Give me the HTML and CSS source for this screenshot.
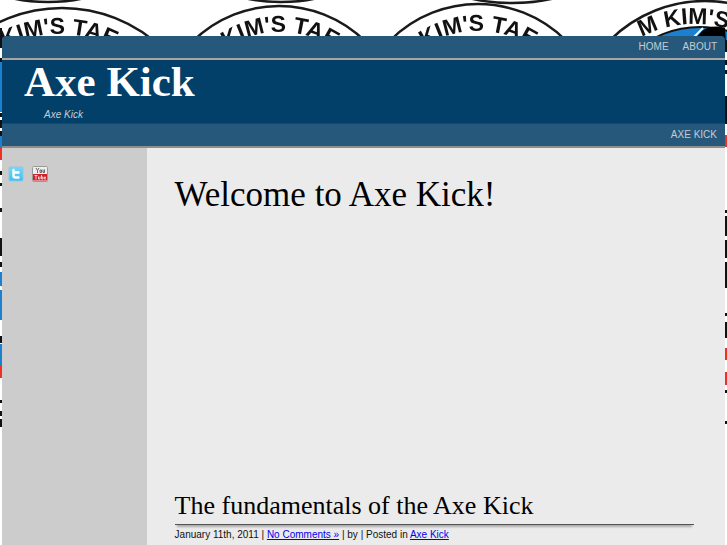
FILE: index.html
```
<!DOCTYPE html>
<html lang="en">
<head>
    <meta charset="UTF-8">
    <meta name="viewport" content="width=device-width, initial-scale=1.0">
    <title>Axe Kick</title>
    <link rel="stylesheet" href="styles.css">
</head>
<body>
    <!-- Tiled club badge behind the page -->
    <svg class="backdrop" viewBox="0 0 727 545" preserveAspectRatio="xMidYMin slice" aria-hidden="true">
        <defs>
            <path id="arc1" d="M-60 153 A119 119 0 0 1 178 153"/>
            <path id="arc2" d="M183 129 A97 97 0 0 1 377 129"/>
            <path id="arc3" d="M381 128 A97 97 0 0 1 575 128"/>
            <path id="arc4" d="M582 136 A112 112 0 0 1 806 136"/>
        </defs>
        <g class="ring">
            <ellipse cx="48" cy="-30" rx="75" ry="32"/>
            <ellipse cx="281" cy="-30" rx="75" ry="32"/>
            <ellipse cx="512" cy="-29" rx="80" ry="32"/>
            <circle cx="62" cy="153" r="145"/>
            <circle cx="279" cy="129" r="123"/>
            <circle cx="478" cy="128" r="124"/>
            <circle cx="705" cy="136" r="135"/>
        </g>
        <circle cx="700" cy="128" r="101" fill="#1c7fd0" stroke="#111" stroke-width="2"/>
        <path d="M696 38 L702 31 Q712 24 725 28 L727 60 H696 Z" fill="#000"/>
        <path d="M693 38 L703 28" stroke="#fff" stroke-width="2"/>
        <path d="M724 40h3v505h-3z" fill="#fff"/>
        <g class="badge-text">
            <text><textPath href="#arc1" startOffset="50%">KIM'S TAE</textPath></text>
            <text><textPath href="#arc2" startOffset="50%">KIM'S TAE</textPath></text>
            <text><textPath href="#arc3" startOffset="50%">KIM'S TAE</textPath></text>
            <text><textPath href="#arc4" startOffset="50%">M KIM'S T</textPath></text>
        </g>
        <g fill="#111">
            <path d="M0 28h2v20h-2z M0 58h2v4h-2z M0 113h2v4h-2z M0 120h2v8h-2z M0 131h2v5h-2z M0 171h2v4h-2z M0 183h2v3h-2z"/>
            <path d="M0 208h2v4h-2z M0 238h2v18h-2z M0 262h2v5h-2z M0 336h2v7h-2z M0 400h2v3h-2z M0 411h2v5h-2z M0 419h2v8h-2z"/>
            <path d="M724 40h3v12h-3z M724 60h3v5h-3z M724 70h3v4h-3z M724 96h3v28h-3z M724 210h3v3h-3z M724 216h3v20h-3z M724 240h3v18h-3z M724 262h3v26h-3z M724 313h3v3h-3z M724 322h3v16h-3z M724 390h3v3h-3z M724 421h3v3h-3z"/>
        </g>
        <path d="M0 62h2v50h-2z M0 136h2v11h-2z M0 272h2v14h-2z M0 290h2v30h-2z M0 344h2v21h-2z" fill="#1c7fd0"/>
        <path d="M0 147h2v13h-2z M0 365h2v13h-2z M724 135h3v12h-3z M724 348h3v12h-3z M724 372h3v13h-3z" fill="#ee3124"/>
    </svg>

    <div class="page">
        <nav class="bar bar-top">
            <a href="#">HOME</a>
            <a href="#">ABOUT</a>
        </nav>
        <header class="masthead">
            <h1><a href="#">Axe Kick</a></h1>
            <p>Axe Kick</p>
        </header>
        <nav class="bar bar-categories">
            <a href="#">AXE KICK</a>
        </nav>

        <div class="columns">
            <aside class="sidebar">
                <a href="#" aria-label="Twitter">
                    <svg width="16" height="16" viewBox="0 0 16 16">
                        <defs>
                            <linearGradient id="sky" x1="0" y1="0" x2="0" y2="1">
                                <stop offset="0" stop-color="#7fd4f5"/>
                                <stop offset="1" stop-color="#35c0f3"/>
                            </linearGradient>
                        </defs>
                        <rect x="1" y="1" width="14" height="14" rx="1" fill="url(#sky)" stroke="#8fcbe2"/>
                        <path d="M5.5 4 V9.5 Q5.5 11.5 7.5 11.5 H10.5 M5.5 6.5 H10.5" fill="none" stroke="#fff" stroke-width="2.4" stroke-linecap="round"/>
                    </svg>
                </a>
                <a href="#" aria-label="YouTube">
                    <svg width="16" height="16" viewBox="0 0 16 16">
                        <rect x=".5" y=".5" width="15" height="15" rx="1" fill="#eee" stroke="#999"/>
                        <path d="M1 8h14v6.5h-14z" fill="#d2202c"/>
                        <path d="M4 2l1.5 2.5L7 2M5.5 4.5V7M8 4v2.5h1.5V4zM11 3.5v3h1.5v-3" fill="none" stroke="#666"/>
                        <path d="M2.5 9.5h3M4 9.5v4M6.5 10.5v2.5h1.5v-2.5M9.5 9v4h1.5v-2h-1.5M14 13h-1.5v-2h1v1" fill="none" stroke="#f7c9cb"/>
                    </svg>
                </a>
            </aside>

            <main class="content">
                <h2 class="welcome">Welcome to Axe Kick!</h2>
                <article class="post">
                    <h2><a href="#">The fundamentals of the Axe Kick</a></h2>
                    <p class="meta">January 11th, 2011 | <a href="#">No Comments »</a> | by | Posted in <a href="#">Axe Kick</a></p>
                </article>
            </main>
        </div>
    </div>
</body>
</html>
```
FILE: styles.css
```
* {
    box-sizing: border-box;
}
html {
    overflow: hidden;
    background: #fff;
}
body {
    margin: 0;
    padding: 36px 2px 0;
    font-family: "Liberation Sans", Arial, sans-serif;
    font-size: 10px;
    color: #111;
}
h1, h2, p {
    margin: 0;
}

/* Background badges */
.backdrop {
    position: fixed;
    top: 0;
    left: 0;
    width: 100%;
    height: 100%;
    z-index: -1;
}
.ring {
    fill: none;
    stroke: #1a1a1a;
    stroke-width: 2.5;
}
.badge-text {
    font-size: 23px;
    font-weight: bold;
    fill: #111;
    text-anchor: middle;
}

.page {
    display: flex;
    flex-direction: column;
    min-height: calc(100vh - 36px);
    border-radius: 4px 4px 0 0;
    overflow: hidden;
}

/* Navigation bars */
.bar {
    display: flex;
    justify-content: flex-end;
    align-items: center;
    gap: 14px;
    padding: 0 8px;
    background: #26587c;
}
.bar a {
    color: #c4cdd3;
    text-decoration: none;
    line-height: 22px;
}
.bar-top {
    border-bottom: 2px solid #aba5a3;
}
.bar-categories {
    border-top: 1px solid #1c4765;
    border-bottom: 2px solid #918f8e;
}

.masthead {
    padding: 0 22px;
    background: #034069;
    color: #c4cdd3;
}
.masthead h1 {
    font-family: "Liberation Serif", "Times New Roman", serif;
    font-size: 43px;
    line-height: 44px;
}
.masthead h1 a {
    color: #fff;
    text-decoration: none;
}
.masthead p {
    padding: 5px 20px 2px;
    font-style: italic;
    line-height: 12px;
}

.columns {
    display: flex;
    flex: 1;
}
.sidebar {
    display: flex;
    align-items: flex-start;
    gap: 8px;
    width: 20%;
    padding: 18px 6px;
    background: #ccc;
}
.sidebar svg {
    display: block;
}
.content {
    flex: 1;
    padding: 24px 31px 0 28px;
    background: #ebebeb;
}
.content h2 {
    font-family: "Liberation Serif", "Times New Roman", serif;
    font-weight: normal;
    color: #000;
}
.content .welcome {
    margin-bottom: 270px;
    font-size: 35px;
    line-height: 46px;
}
.post h2 {
    border-bottom: 1px solid #555;
    box-shadow: 0 4px 2px -2px #aaa;
    font-size: 26px;
    line-height: 36px;
}
.post h2 a {
    color: inherit;
    text-decoration: none;
}
.meta {
    padding-top: 4px;
    line-height: 12px;
}
.meta a {
    color: #00e;
}
```
